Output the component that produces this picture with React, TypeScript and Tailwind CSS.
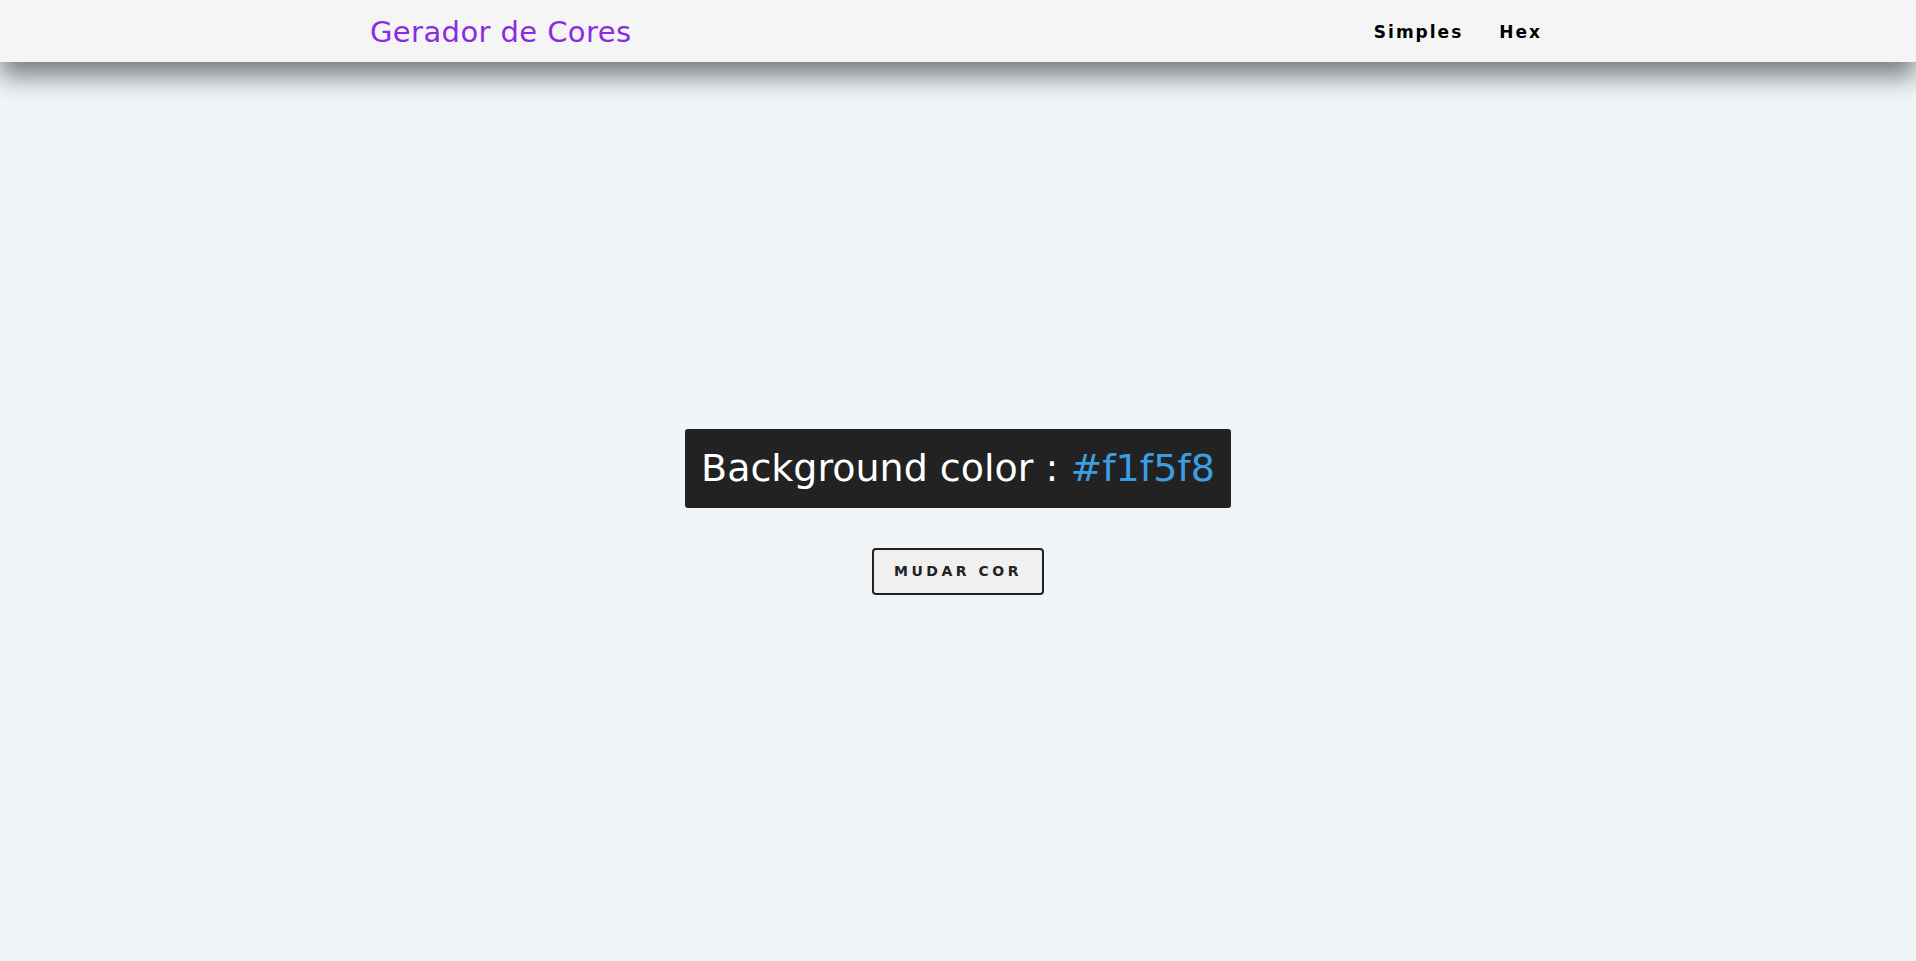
import { useState } from "react";

const font = { fontFamily: '"Comic Sans MS", "DejaVu Sans", sans-serif' };

export default function App() {
  const [color] = useState("#f1f5f8");

  return (
    <div className="h-[961px] flex flex-col bg-[#f1f5f8] overflow-hidden" style={font}>
      {/* navbar */}
      <nav className="h-[62px] shrink-0 bg-[#f5f5f5] shadow-[0_14px_26px_rgba(0,0,0,0.5)] relative z-10">
        <div className="w-[1176px] mx-auto h-full pt-[4px] flex items-center justify-between">
          <h1 className="text-[29px] text-[#8a2be2] tracking-[0.4px]">Gerador de Cores</h1>
          <ul className="flex gap-[36px] mr-[4px]">
            <li className="text-[17px] font-bold tracking-[2px] text-black">Simples</li>
            <li className="text-[17px] font-bold tracking-[2px] text-black">Hex</li>
          </ul>
        </div>
      </nav>

      {/* main */}
      <main className="flex-1 flex flex-col items-center justify-center">
        <h2 className="bg-[#222222] text-white text-[38px] px-[16px] py-[11px] rounded-[3px]">
          Background color : <span className="text-[#3b9ee2]">{color}</span>
        </h2>
        <button className="mt-[40px] bg-[#f0f0f0] border-2 border-[#222] rounded-[4px] px-[20px] py-[11px] text-[14px] font-bold uppercase tracking-[3.5px] text-[#222]">
          Mudar cor
        </button>
      </main>
    </div>
  );
}
